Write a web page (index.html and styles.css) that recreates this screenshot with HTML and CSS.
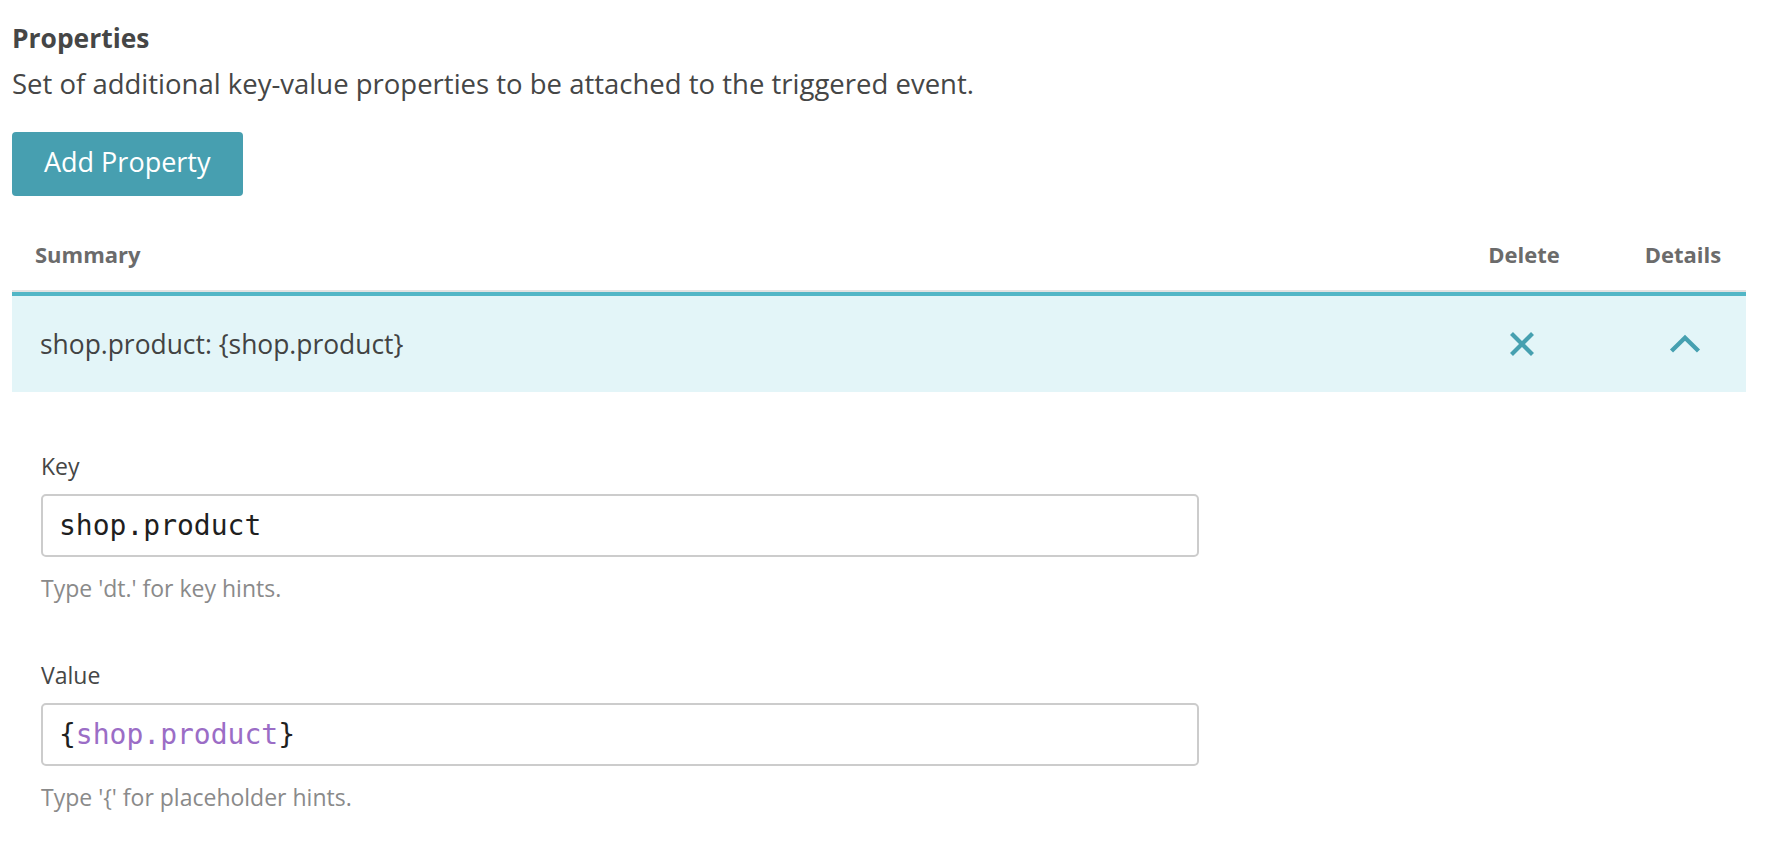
FILE: index.html
```html
<!DOCTYPE html>
<html lang="en">
<head>
<meta charset="utf-8">
<title>Properties</title>
<link rel="stylesheet" href="styles.css">
</head>
<body>
<main class="page">
  <section class="props">
    <h2 class="props-title">Properties</h2>
    <p class="props-desc">Set of additional key-value properties to be attached to the triggered event.</p>
    <button class="btn-primary" type="button">Add Property</button>

    <div class="table">
      <div class="table-head">
        <div class="col-summary">Summary</div>
        <div class="col-center">Delete</div>
        <div class="col-center">Details</div>
      </div>
      <div class="table-row">
        <div class="col-summary row-summary">shop.product: {shop.product}</div>
        <div class="col-center">
          <button class="icon-btn" type="button" aria-label="Delete">
            <svg class="icon-x" viewBox="0 0 26 26" width="26" height="26"><path d="M2.5 2.5 L23.5 23.5 M23.5 2.5 L2.5 23.5" fill="none" stroke="currentColor" stroke-width="4.2"/></svg>
          </button>
        </div>
        <div class="col-center">
          <button class="icon-btn" type="button" aria-label="Collapse">
            <svg class="icon-chevron" viewBox="0 0 32 20" width="32" height="20"><path d="M2.5 17 L16 3.8 L29.5 17" fill="none" stroke="currentColor" stroke-width="4.4"/></svg>
          </button>
        </div>
      </div>

      <div class="row-details">
        <div class="field">
          <label class="field-label">Key</label>
          <div class="field-input">shop.product</div>
          <div class="field-hint">Type 'dt.' for key hints.</div>
        </div>
        <div class="field">
          <label class="field-label">Value</label>
          <div class="field-input"><span class="brace">{</span><span class="placeholder">shop.product</span><span class="brace">}</span></div>
          <div class="field-hint">Type '{' for placeholder hints.</div>
        </div>
      </div>
    </div>
  </section>
</main>
</body>
</html>
```

FILE: styles.css
```css
html, body {
  margin: 0;
  background: #ffffff;
}

body {
  font-family: "Open Sans", "Noto Sans", sans-serif;
  color: #454646;
}

.page {
  padding: 20px 22px 0 12px;
}

.props-title {
  margin: 0;
  font-size: 26.4px;
  font-weight: 700;
  line-height: 36px;
  color: #454646;
}

.props-desc {
  margin: 8px 0 0;
  font-size: 27.5px;
  line-height: 40px;
}

.btn-primary {
  display: block;
  margin-top: 28px;
  padding: 12px 32px 16px;
  font-family: "Open Sans", "Noto Sans", sans-serif;
  font-size: 27px;
  line-height: 36px;
  font-weight: 400;
  color: #ffffff;
  background: #479fb0;
  border: 0;
  border-radius: 4px;
}

.table {
  margin-top: 42px;
}

.table-head,
.table-row {
  display: grid;
  grid-template-columns: 1fr 128px 126px;
  column-gap: 32px;
}

.table-head {
  padding-bottom: 20px;
  border-bottom: 2px solid #e2e2e2;
  font-size: 22px;
  font-weight: 700;
  line-height: 32px;
  color: #6b6b6b;
}

.col-summary {
  padding-left: 23px;
}

.col-center {
  display: flex;
  justify-content: center;
  align-items: center;
}

.table-row {
  min-height: 96px;
  align-items: center;
  background: #e3f5f8;
  border-top: 4px solid #52b6c6;
}

.row-summary {
  padding-left: 28px;
  font-size: 26.4px;
  line-height: 36px;
  color: #424343;
}

.icon-btn {
  display: flex;
  align-items: center;
  justify-content: center;
  padding: 0;
  margin: 0;
  background: none;
  border: 0;
  color: #46a0b0;
}

.icon-x {
  display: block;
  margin-right: 5px;
}

.icon-chevron {
  display: block;
  margin-left: 4px;
}

.row-details {
  padding: 59px 0 0 29px;
}

.field + .field {
  margin-top: 57px;
}

.field-label {
  display: block;
  font-size: 23px;
  line-height: 30px;
  color: #454646;
}

.field-input {
  margin-top: 13px;
  width: 1158px;
  height: 63px;
  box-sizing: border-box;
  display: flex;
  align-items: center;
  padding: 0 16px;
  border: 2px solid #cccccc;
  border-radius: 5px;
  font-family: "DejaVu Sans Mono", "Liberation Mono", monospace;
  font-size: 28px;
  line-height: 34px;
  color: #1f1f1f;
}

.placeholder {
  color: #9b6dc6;
}

.field-hint {
  margin-top: 16px;
  font-size: 23px;
  line-height: 30px;
  color: #8a8a8a;
}
```
